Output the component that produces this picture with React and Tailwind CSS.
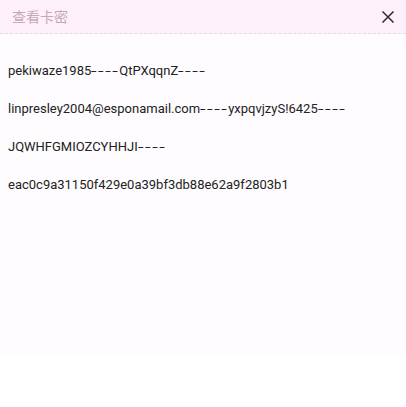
import React from 'react';

const rows = [
  ['pekiwaze1985', '----', 'QtPXqqnZ', '----'],
  ['linpresley2004@esponamail.com', '----', 'yxpqvjzyS!6425', '----'],
  ['JQWHFGMIOZCYHHJI', '----'],
  ['eac0c9a31150f429e0a39bf3db88e62a9f2803b1'],
];

export default function App() {
  return (
    <div className="w-[406px] h-[407px] bg-white" style={{ fontFamily: 'Roboto, "Noto Sans CJK SC", sans-serif' }}>
      <div className="h-[355px] bg-[#fefcfe] flex flex-col">
        {/* Header */}
        <div className="h-[34px] shrink-0 bg-[#fdf0fb] border-b border-dashed border-[#e3dbe1] flex items-center justify-between pl-3 pr-3">
          <span className="text-[14px] leading-none text-[#c8a6ba]">查看卡密</span>
          <button className="w-[12px] h-[12px] flex items-center justify-center text-[#2a2a33]">
            <svg width="12" height="12" viewBox="0 0 12 12" fill="none" stroke="currentColor" strokeWidth="1.5" strokeLinecap="square">
              <path d="M1 1L11 11M11 1L1 11" />
            </svg>
          </button>
        </div>

        {/* Body */}
        <div className="flex flex-col pt-[28px] px-2 gap-[21px]">
          {rows.map((parts) => (
            <div key={parts.join('')} className="text-[13px] leading-[17px] text-[#222] whitespace-nowrap">
              {parts.map((p, i) =>
                p === '----' ? (
                  <span key={i} className="inline-block w-[28px] align-top">
                    <span className="inline-block origin-left scale-x-[1.55] tracking-[1px]">{p}</span>
                  </span>
                ) : (
                  <span key={i}>{p}</span>
                )
              )}
            </div>
          ))}
        </div>
      </div>
    </div>
  );
}
